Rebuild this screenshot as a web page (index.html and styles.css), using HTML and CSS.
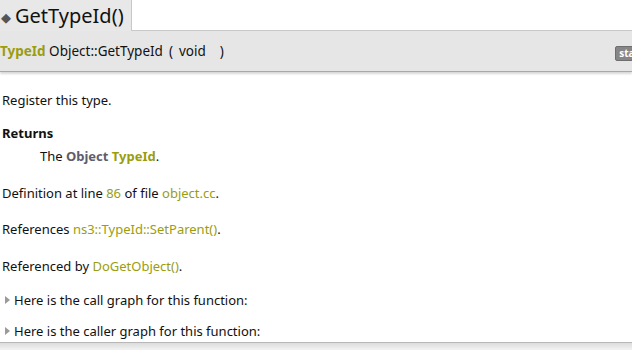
FILE: index.html
```html
<!DOCTYPE html>
<html>
<head>
<meta charset="utf-8">
<link rel="stylesheet" href="styles.css">
</head>
<body>
<div class="page">
  <div class="titlerow">
    <div class="memtitle"><span class="diamond">◆</span>GetTypeId()</div>
    <div class="titlefill"></div>
  </div>
  <div class="memproto">
    <div class="proto">
      <span class="link strong">TypeId</span>&nbsp;Object::GetTypeId<span class="paren">(</span><span class="param">void</span><span class="paren close">)</span>
    </div>
    <span class="badge">static</span>
  </div>
  <div class="memdoc">
    <p class="line brief">Register this type.</p>
    <div class="line rt">Returns</div>
    <div class="line rd">The <span class="obj">Object</span> <span class="link strong">TypeId</span>.</div>
    <p class="line def">Definition at line <span class="link">86</span> of file <span class="link">object.cc</span>.</p>
    <p class="line refs">References <span class="link">ns3::TypeId::SetParent()</span>.</p>
    <p class="line refby">Referenced by <span class="link">DoGetObject()</span>.</p>
    <div class="line graph g1"><span class="tri"></span>Here is the call graph for this function:</div>
    <div class="line graph g2"><span class="tri"></span>Here is the caller graph for this function:</div>
  </div>
  <div class="footer"></div>
</div>
</body>
</html>
```
FILE: styles.css
```css
html, body {
  margin: 0;
  padding: 0;
  background: #fff;
}
body {
  font-family: "Noto Sans", "DejaVu Sans", sans-serif;
  font-size: 13px;
  color: #111;
  width: 632px;
  height: 351px;
  overflow: hidden;
}
.page {
  display: flex;
  flex-direction: column;
}
.titlerow {
  display: flex;
  height: 31px;
}
.memtitle {
  width: 132px;
  box-sizing: border-box;
  background: #e8e8e8;
  font-size: 20px;
  line-height: 31px;
  color: #111;
  display: flex;
  align-items: center;
  border-right: 1px solid #c8c8c8;
}
.diamond {
  font-size: 13px;
  color: #555;
  margin: 3px 4px 0 1px;
}
.titlefill {
  flex: 1;
  border-bottom: 1px solid #c8c8c8;
}
.memproto {
  height: 40px;
  background: #e6e6e6;
  display: flex;
  align-items: center;
  justify-content: space-between;
  border-bottom: 1px solid #a8a8a8;
  box-shadow: 0 2px 2px #d8d8d8;
  position: relative;
}
.proto {
  font-size: 13.5px;
  color: #111;
  white-space: nowrap;
}
.paren { margin-left: 6px; margin-right: 6px; }
.paren.close { margin-left: 14px; }
.badge {
  background: #868686;
  color: #fff;
  font-size: 10px;
  font-weight: bold;
  border: 1px solid #6e6e6e;
  border-radius: 2px;
  padding: 0 3px;
  margin-right: -19px;
  line-height: 13px;
  align-self: center;
  margin-top: 4px;
}
.link { color: #9a9d10; }
.strong { font-weight: bold; }
.obj { color: #5d5d6c; font-weight: bold; }
.memdoc {
  display: flex;
  flex-direction: column;
  padding: 19px 0 0 2px;
  height: 271px;
  box-sizing: border-box;
  border-bottom: 1px solid #b8b8b8;
}
.line {
  margin: 0;
  line-height: 18px;
}
.rt { font-weight: bold; margin-top: 15px; }
.rd { padding-left: 38px; margin-top: 5px; }
.def { margin-top: 19px; }
.refs { margin-top: 18px; }
.refby { margin-top: 19px; }
.graph {
  display: flex;
  align-items: center;
}
.g1 { margin-top: 16px; }
.g2 { margin-top: 13px; }
.tri {
  width: 0;
  height: 0;
  border-top: 4px solid transparent;
  border-bottom: 4px solid transparent;
  border-left: 5px solid #9a9a9a;
  margin: 0 4px 0 3px;
}
.footer {
  height: 7px;
  background: linear-gradient(#dcdcdc, #f2f2f2);
}
```
